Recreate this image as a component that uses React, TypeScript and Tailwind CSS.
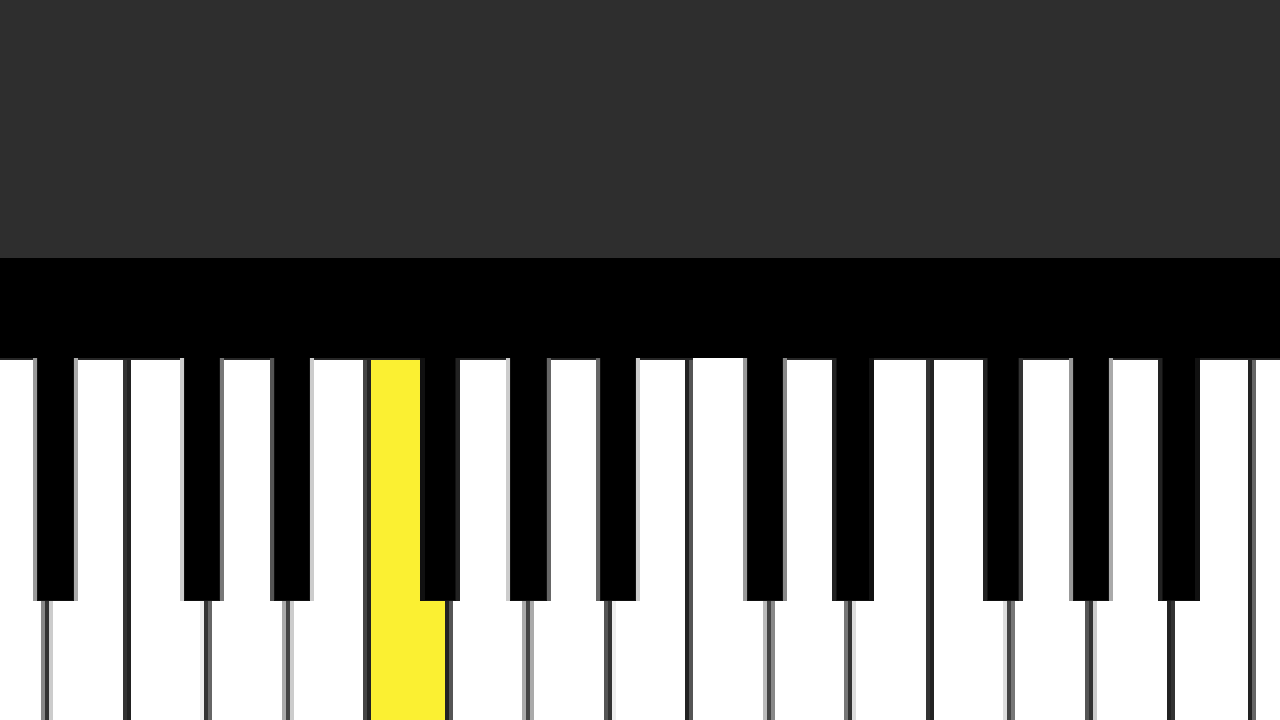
type Seg =
  | { kind: "key"; w: string; fill: string; top?: boolean }
  | { kind: "sep"; stripes: string[] };

// white keys and the blurred gaps between them, left to right
const row: Seg[] = [
  { kind: "key", w: "w-[41px]", fill: "bg-white" },
  { kind: "sep", stripes: ["bg-[#888]", "bg-[#333]", "bg-[#ccc]"] },
  { kind: "key", w: "w-[70px]", fill: "bg-white" },
  { kind: "sep", stripes: ["bg-[#333]", "bg-[#222]"] },
  { kind: "key", w: "w-[69px]", fill: "bg-white" },
  { kind: "sep", stripes: ["bg-[#eee]", "bg-[#333]", "bg-[#666]"] },
  { kind: "key", w: "w-[70px]", fill: "bg-white" },
  { kind: "sep", stripes: ["bg-[#aaa]", "bg-[#444]", "bg-[#ccc]"] },
  { kind: "key", w: "w-[69px]", fill: "bg-white" },
  { kind: "sep", stripes: ["bg-[#444]", "bg-[#222]"] },
  { kind: "key", w: "w-[74px]", fill: "bg-[#fbf032]" },
  { kind: "sep", stripes: ["bg-[#222]", "bg-[#555]"] },
  { kind: "key", w: "w-[69px]", fill: "bg-white" },
  { kind: "sep", stripes: ["bg-[#aaa]", "bg-[#444]", "bg-[#aaa]"] },
  { kind: "key", w: "w-[70px]", fill: "bg-white" },
  { kind: "sep", stripes: ["bg-[#555]", "bg-[#333]", "bg-[#eee]"] },
  { kind: "key", w: "w-[69px]", fill: "bg-white" },
  { kind: "sep", stripes: ["bg-[#222]", "bg-[#555]"] },
  { kind: "key", w: "w-[70px]", fill: "bg-white", top: false },
  { kind: "sep", stripes: ["bg-[#bbb]", "bg-[#444]", "bg-[#888]"] },
  { kind: "key", w: "w-[69px]", fill: "bg-white" },
  { kind: "sep", stripes: ["bg-[#777]", "bg-[#333]", "bg-[#ddd]"] },
  { kind: "key", w: "w-[70px]", fill: "bg-white" },
  { kind: "sep", stripes: ["bg-[#333]", "bg-[#222]"] },
  { kind: "key", w: "w-[69px]", fill: "bg-white" },
  { kind: "sep", stripes: ["bg-[#ddd]", "bg-[#444]", "bg-[#777]"] },
  { kind: "key", w: "w-[70px]", fill: "bg-white" },
  { kind: "sep", stripes: ["bg-[#555]", "bg-[#333]", "bg-[#ccc]"] },
  { kind: "key", w: "w-[70px]", fill: "bg-white" },
  { kind: "sep", stripes: ["bg-[#222]", "bg-[#333]"] },
  { kind: "key", w: "w-[73px]", fill: "bg-white" },
  { kind: "sep", stripes: ["bg-[#222]", "bg-[#666]"] },
  { kind: "key", w: "w-[24px]", fill: "bg-white" },
];

const blacks = [
  { left: "left-[33px]", w: "w-[45px]", l: "bg-[#999]", r: "bg-[#aaa]" },
  { left: "left-[180px]", w: "w-[44px]", l: "bg-[#ccc]", r: "bg-[#777]" },
  { left: "left-[270px]", w: "w-[44px]", l: "bg-[#555]", r: "bg-[#ccc]" },
  { left: "left-[420px]", w: "w-[40px]", l: "bg-[#111]", r: "bg-[#222]" },
  { left: "left-[506px]", w: "w-[45px]", l: "bg-[#ccc]", r: "bg-[#666]" },
  { left: "left-[596px]", w: "w-[44px]", l: "bg-[#666]", r: "bg-[#ccc]" },
  { left: "left-[743px]", w: "w-[44px]", l: "bg-[#999]", r: "bg-[#888]" },
  { left: "left-[832px]", w: "w-[42px]", l: "bg-[#222]", r: "bg-[#111]" },
  { left: "left-[983px]", w: "w-[40px]", l: "bg-[#222]", r: "bg-[#333]" },
  { left: "left-[1069px]", w: "w-[44px]", l: "bg-[#999]", r: "bg-[#aaa]" },
  { left: "left-[1158px]", w: "w-[42px]", l: "bg-[#222]", r: "bg-[#111]" },
];

function BlackKey({ left, w, l, r }: { left: string; w: string; l: string; r: string }) {
  return (
    <div className={`absolute top-0 ${left} ${w} flex h-[243px]`}>
      <div className={`w-[4px] ${l}`} />
      <div className="flex-1 border border-t-0 border-[#111] bg-black" />
      <div className={`w-[4px] ${r}`} />
    </div>
  );
}

export default function App() {
  return (
    <div className="flex h-[720px] w-[1280px] flex-col overflow-hidden bg-[#2e2e2e]">
      {/* empty stage above the keyboard */}
      <div className="h-[258px] bg-[#2e2e2e]" />

      {/* key bed */}
      <div className="h-[100px] bg-black" />

      {/* keys */}
      <div className="relative flex h-[362px]">
        {row.map((s, i) =>
          s.kind === "key" ? (
            <div
              key={i}
              className={`${s.w} h-full ${s.fill} ${
                s.top === false ? "" : "border-t-2 border-[#262626]"
              }`}
            />
          ) : (
            <div key={i} className="flex h-full border-t-2 border-[#262626]">
              {s.stripes.map((c, j) => (
                <div key={j} className={`h-full w-[4px] ${c}`} />
              ))}
            </div>
          )
        )}

        {blacks.map((b, i) => (
          <BlackKey key={i} {...b} />
        ))}
      </div>
    </div>
  );
}
